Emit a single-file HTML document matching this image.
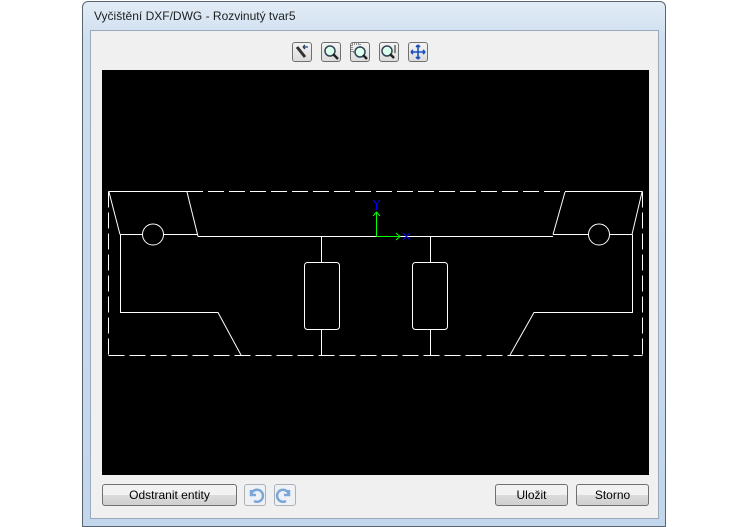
<!DOCTYPE html>
<html><head><style>
body{margin:0;width:750px;height:526px;background:#fff;position:relative;overflow:hidden;font-family:"Liberation Sans",sans-serif;font-size:12px}
.win{position:absolute;left:82px;top:1px;width:584px;height:526px;border:1px solid #5a6470;border-radius:6px 6px 0 0;background:linear-gradient(#e2ecf6,#cddef0 40px,#c2d6ec);box-sizing:border-box}
.title{position:absolute;left:94px;top:9px;font-size:12px;color:#1e1e1e}
.panel{position:absolute;left:90px;top:30px;width:569px;height:489px;background:#f0f0f0;border:1px solid #9aaabb;box-sizing:border-box}
.tb{position:absolute;top:42px;width:20px;height:20px;border:1px solid #707070;border-radius:3px;background:linear-gradient(#f4f4f4,#dcdcdc);box-sizing:border-box}
.btn{position:absolute;top:484px;height:22px;border:1px solid #707070;border-radius:3px;background:linear-gradient(#f2f2f2 50%,#dcdcdc 50%,#cfcfcf);box-sizing:border-box;text-align:center;line-height:20px;font-size:12px;color:#000}
.ib{position:absolute;top:484px;width:22px;height:22px;border:1px solid #adb2b5;border-radius:3px;background:#eef2f6;box-sizing:border-box}
</style></head><body>
<div class="win"></div>
<div class="title">Vyčištění DXF/DWG - Rozvinutý tvar5</div>
<div class="panel"></div>
<div class="tb" style="left:292px"><svg width="18" height="18"><path d="M4 4l8 10" stroke="#333" stroke-width="3"/><path d="M10 4h5M10 4l2 2M10 4l2-2" stroke="#246" stroke-width="1.3" fill="none"/></svg></div>
<div class="tb" style="left:321px"><svg width="18" height="18"><circle cx="8" cy="8" r="5" fill="#dfe" stroke="#345" stroke-width="1.5"/><path d="M11 11l5 5" stroke="#222" stroke-width="2.5"/></svg></div>
<div class="tb" style="left:350px"><svg width="18" height="18"><rect x="1" y="1" width="8" height="8" fill="none" stroke="#333" stroke-dasharray="1 1"/><circle cx="9" cy="9" r="5" fill="#dfe" stroke="#345" stroke-width="1.5"/><path d="M12 12l4 4" stroke="#222" stroke-width="2.5"/></svg></div>
<div class="tb" style="left:379px"><svg width="18" height="18"><circle cx="7" cy="8" r="5" fill="#dfe" stroke="#345" stroke-width="1.5"/><path d="M10 11l4 4" stroke="#222" stroke-width="2.5"/><path d="M15 2v8" stroke="#222"/></svg></div>
<div class="tb" style="left:408px"><svg width="18" height="18"><path d="M9 2v14M2 9h14M9 2l-2 2M9 2l2 2M9 16l-2-2M9 16l2-2M2 9l2-2M2 9l2 2M16 9l-2-2M16 9l-2 2" stroke="#1a4fc0" stroke-width="1.6" fill="none"/></svg></div>
<svg style="position:absolute;left:102px;top:70px" width="547" height="405">
<rect width="547" height="405" fill="#000"/>
<g stroke="#fff" stroke-width="1" fill="none" transform="translate(-102,-70)">
<path d="M108.5 191.5H187.5M565 191.5H642.5"/>
<path d="M187 191.5H565M108.5 191.5V355.5M642.5 191.5V355.5M108.5 355.5H642.5" stroke-dasharray="16 5"/>
<path d="M109 192L120 234.5M187 192L198 236.5M120.5 234.5H142.5M163.5 234.5H198M198 236.5H553M120.5 234.5V312.5H218L241 355"/>
<circle cx="153" cy="234.5" r="10.5"/>
<path d="M565 192L553 234.5M642 192L632 234.5M553 234.5H588.5M609.5 234.5H632.5M632.5 234.5V312.5H534L510 355"/>
<circle cx="599" cy="234.5" r="10.5"/>
<path d="M321.5 236.5V262M321.5 329V355M430.5 236.5V262M430.5 329V355"/>
<rect x="304.5" y="262.5" width="35" height="67" rx="3"/>
<rect x="412.5" y="262.5" width="35" height="67" rx="3"/>
<path d="M376.5 236.5V212M373 216l3.5-4 3.5 4M376.5 236.5H400M396 233l4 3.5-4 3.5" stroke="#0f0"/>
<path d="M373 200l3.5 4 3.5-4M376.5 204V210M403 233l7 7M410 233l-7 7" stroke="#00f"/>
</g></svg>
<div class="btn" style="left:102px;width:135px">Odstranit entity</div>
<div class="ib" style="left:244px"><svg width="20" height="20"><path d="M6 5v5h5M6 10a6 6 0 1 1 3 6" stroke="#7aa6d8" stroke-width="2.5" fill="none"/></svg></div>
<div class="ib" style="left:274px"><svg width="20" height="20"><path d="M14 5v5H9M14 10a6 6 0 1 0-3 6" stroke="#7aa6d8" stroke-width="2.5" fill="none"/></svg></div>
<div class="btn" style="left:495px;width:73px">Uložit</div>
<div class="btn" style="left:576px;width:73px">Storno</div>
</body></html>
